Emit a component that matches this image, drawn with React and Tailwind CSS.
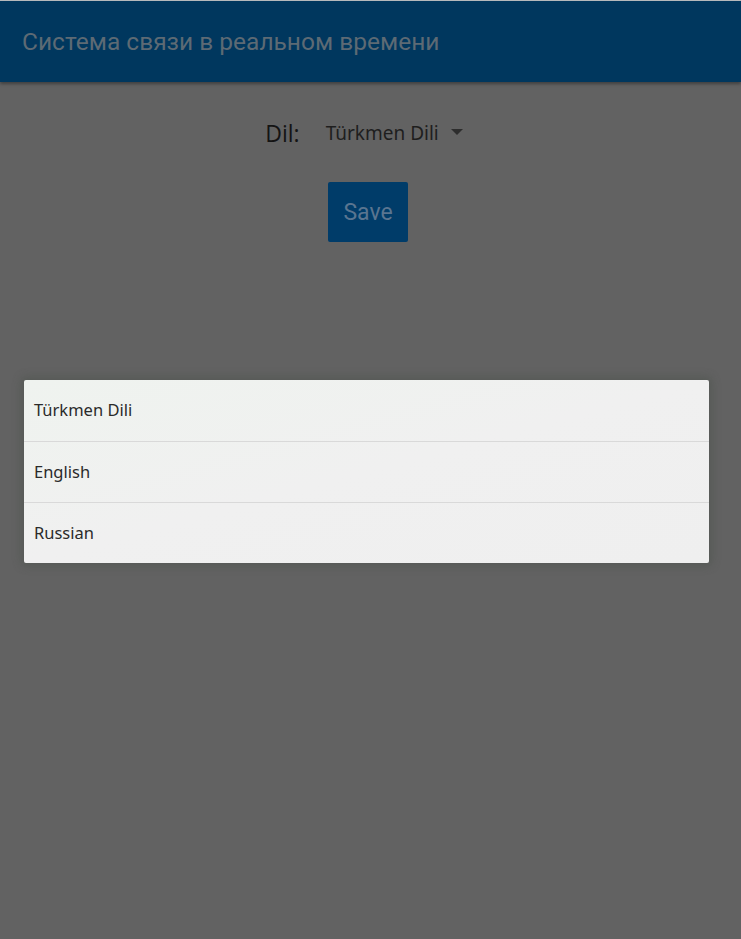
export default function App() {
  const items = ["Türkmen Dili", "English", "Russian"];
  return (
    <div className="relative h-[939px] w-full overflow-hidden bg-[#626262]" style={{ fontFamily: "Roboto, 'Noto Sans', sans-serif" }}>
      <div className="h-[1px] bg-[#b9bcbe]" />
      <header className="flex h-[81px] items-center bg-[#00375e] pl-[22px] pt-[2px] shadow-[0_2px_3px_rgba(0,0,0,0.35)]">
        <h1 className="text-[24.5px] leading-none text-[#5d6a74]">Система связи в реальном времени</h1>
      </header>
      <main className="flex flex-col items-center pt-[37px]">
        <div className="flex items-center pr-[13px]">
          <span className="text-[23px] leading-none text-[#141414]" style={{ fontFamily: "'Open Sans', sans-serif" }}>Dil:</span>
          <div className="ml-[26px] flex items-center">
            <span className="text-[19px] text-[#1e1e1e]" style={{ fontFamily: "'Noto Sans', sans-serif" }}>Türkmen Dili</span>
            <svg width="12" height="6" viewBox="0 0 12 6" className="ml-[12px] mb-[2px]">
              <path d="M0 0 L12 0 L6 6 Z" fill="#2d2d2d" />
            </svg>
          </div>
        </div>
        <button className="mt-[34px] mr-[5px] flex h-[60px] w-[80px] items-center justify-center rounded-[2px] bg-[#003c69] pt-[3px] text-[23px] text-[#5a7590]">
          Save
        </button>
      </main>
      <div className="absolute left-[24px] top-[380px] w-[685px] overflow-hidden rounded-[2px] bg-gradient-to-br from-[#eff3ef] via-[#f0f0f0] to-[#efefef] shadow-[0_0_8px_3px_rgba(70,80,70,0.45)]">
        {items.map((t, i) => (
          <div key={t} className={`flex h-[61px] items-center pl-[10px] ${i > 0 ? "border-t border-[#d9d9d9]" : ""}`}>
            <span className="text-[16.5px] text-[#2a2a2a]" style={{ fontFamily: "'Noto Sans', sans-serif" }}>{t}</span>
          </div>
        ))}
      </div>
    </div>
  );
}
